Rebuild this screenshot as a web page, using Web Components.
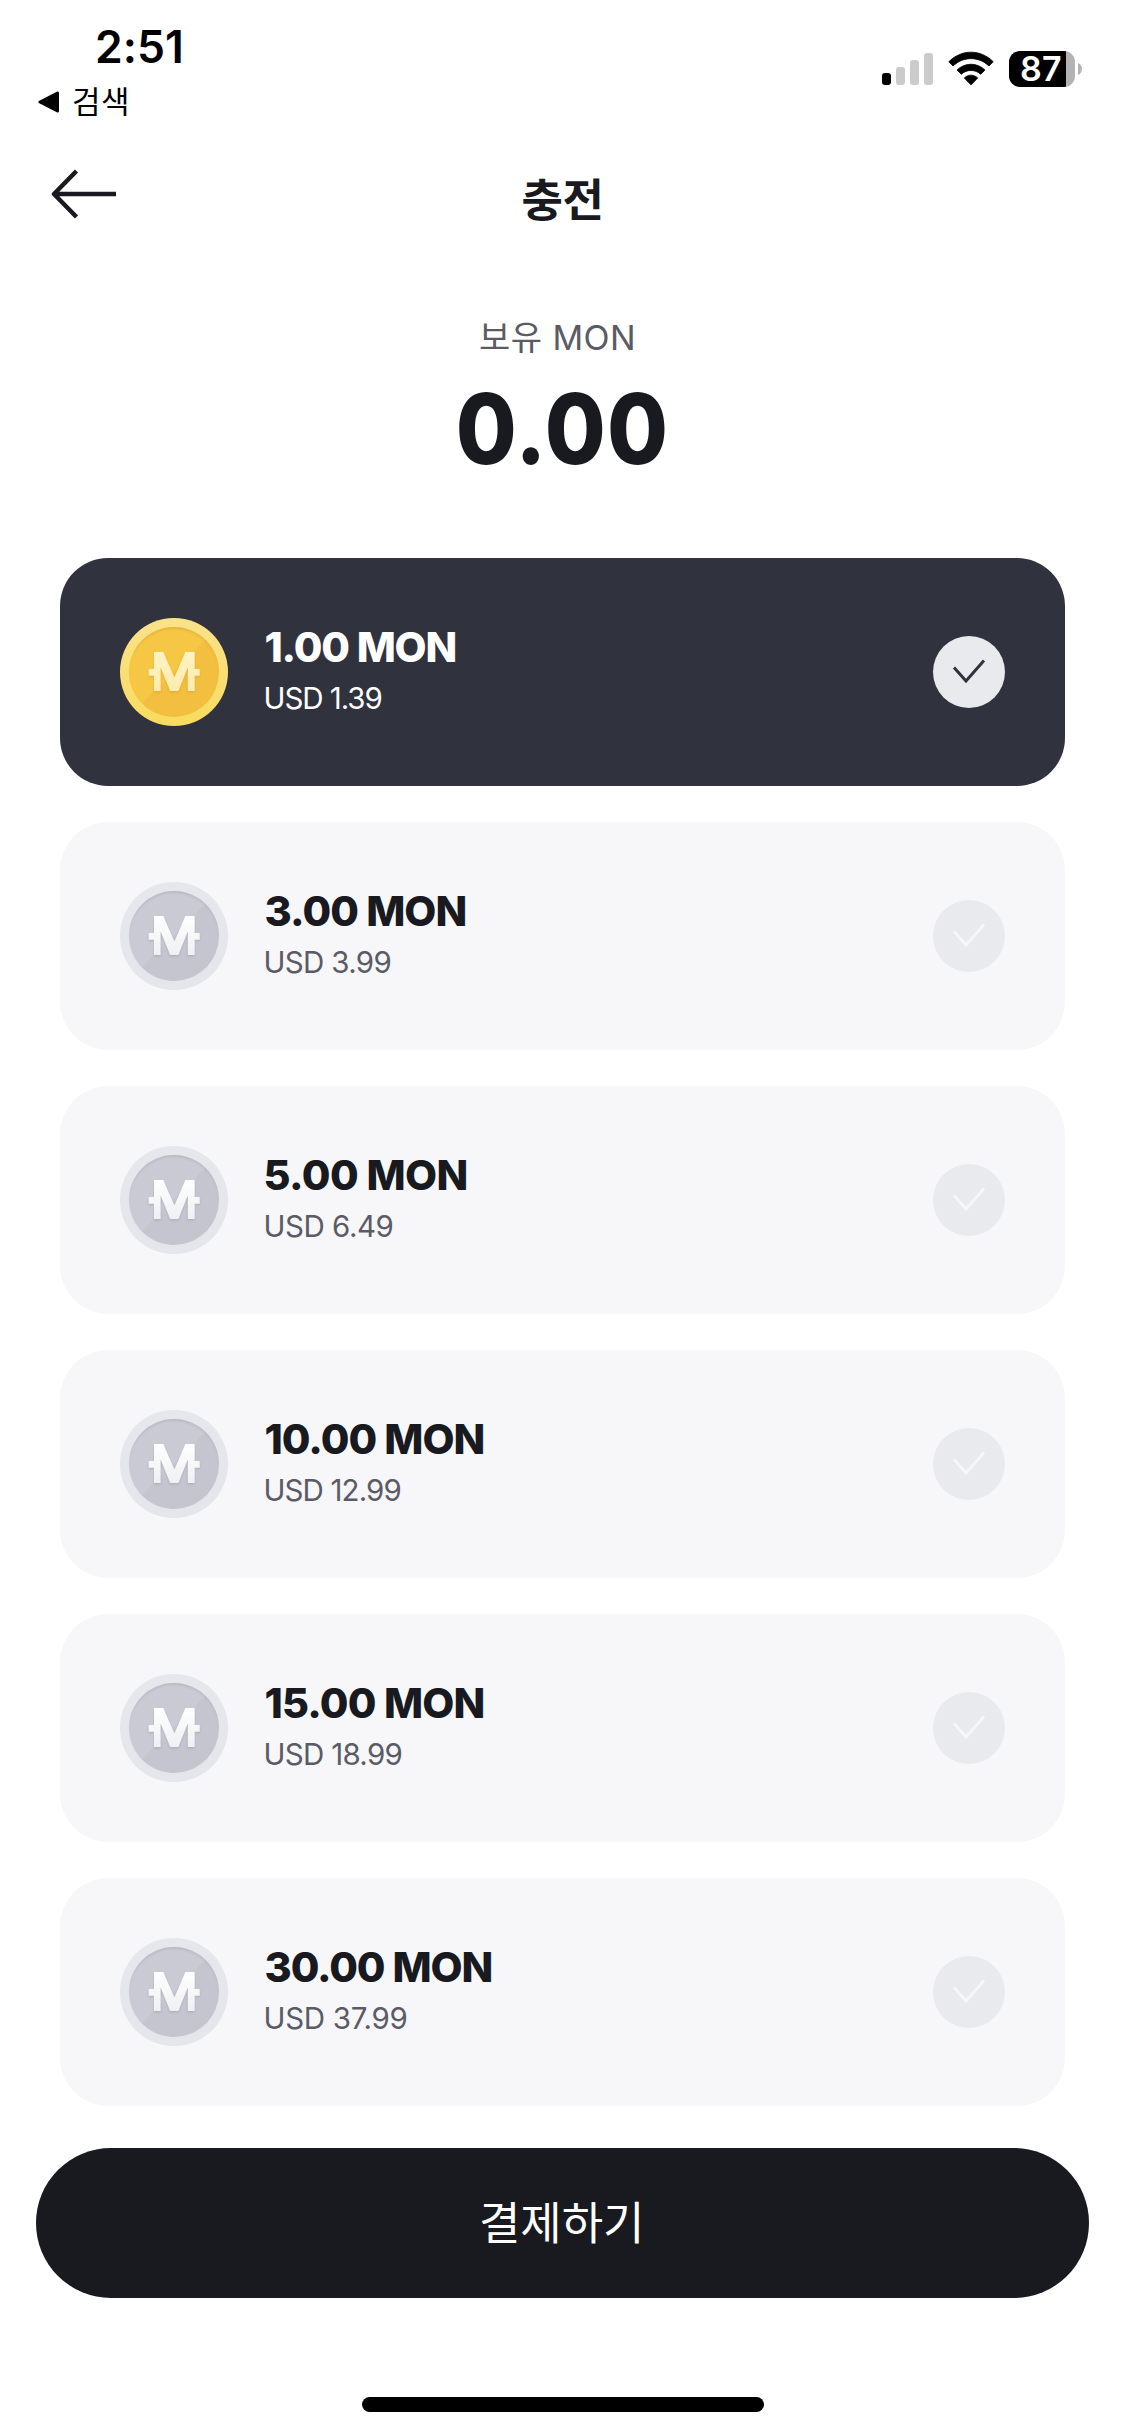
<!DOCTYPE html>
<html lang="ko">
<head>
<meta charset="utf-8">
<title>충전</title>
<style>
  html, body { margin: 0; background: #fff; }
  body { width: 1125px; height: 2436px; overflow: hidden; font-family: Inter, "Noto Sans CJK KR", sans-serif; color: #191920; }
</style>
</head>
<body>
<charge-screen></charge-screen>
<script>
const define = (name, html, setup) => customElements.define(name, class extends HTMLElement {
  connectedCallback() {
    if (this.shadowRoot) return;
    const t = document.createElement('template');
    t.innerHTML = html;
    this.attachShadow({ mode: 'open' }).appendChild(t.content.cloneNode(true));
    if (setup) setup(this, this.shadowRoot);
  }
});

/* One line of text whose tracking is set so that its ink spans "w" pixels. */
const pen = document.createElement('canvas').getContext('2d');
define('fit-text', `<style>
  :host { display: block; white-space: nowrap; width: var(--w); flex: none; }
</style><slot></slot>`, (el) => {
  const text = el.textContent, w = +el.getAttribute('w');
  const cs = getComputedStyle(el);
  pen.font = `${cs.fontWeight} ${cs.fontSize} ${cs.fontFamily}`;
  const m = pen.measureText(text);
  const ink = m.actualBoundingBoxLeft + m.actualBoundingBoxRight;
  el.style.setProperty('--w', w + 'px');
  el.style.letterSpacing = ((w - ink) / (text.length - 1)).toFixed(3) + 'px';
  el.style.textIndent = m.actualBoundingBoxLeft.toFixed(2) + 'px';
});

define('status-bar', `<style>
  :host { display: flex; justify-content: space-between; height: 132px; color: #000; }
  .left { padding: 23px 0 0 38px; }
  .time { font-size: 44.5px; font-weight: 600; line-height: 48px; padding-left: 59px; }
  .back { display: flex; align-items: center; gap: 14px; margin-top: 11px; font-size: 31px; line-height: 40px; font-weight: 400; }
  .right { display: flex; align-items: center; height: 36px; padding: 51px 43px 0 0; }
  .signal { margin-right: 15px; } .wifi { margin-right: 15px; }
  .battery { display: flex; align-items: center; justify-content: center; width: 66px; height: 36px; border-radius: 11px; background: linear-gradient(90deg, #000 57px, #b3b3b3 57px); color: #fff; font-size: 34px; line-height: 36px; font-weight: 600; }
  .battery fit-text { margin-right: 2px; }
  .nub { margin-left: 3px; }
  svg { display: block; flex: none; }
</style>
<div class="left">
  <div class="time"><fit-text w="84">2:51</fit-text></div>
  <div class="back">
    <svg width="21" height="22" viewBox="0 0 21 22"><path d="M2 11 L19.5 2 V20 Z" stroke="#000" stroke-width="3" stroke-linejoin="round"/></svg>
    <fit-text w="54">검색</fit-text>
  </div>
</div>
<div class="right">
  <svg class="signal" width="51" height="36" viewBox="0 0 51 36"><rect y="22" width="9" height="12" rx="3"/><g fill="#cbcbcb"><rect x="14" y="16" width="9" height="18" rx="3"/><rect x="28" y="9" width="9" height="25" rx="3"/><rect x="42" y="2" width="9" height="32" rx="3"/></g></svg>
  <svg class="wifi" width="46" height="36" viewBox="0 0 46 36"><path d="M0.8 10.7 C13.5 -2 32.5 -2 45.2 10.7 L41 15 C30.8 5.2 15.2 5.2 5 15 Z M9 19 C17 11.3 29 11.3 37 19 L32.7 23.3 C27.4 18.2 18.6 18.2 13.3 23.3 Z M16.3 27 C20 23.2 26 23.2 29.7 27 L23 33.9 Z" stroke="#000" stroke-width=".8" stroke-linejoin="round"/></svg>
  <div class="battery"><fit-text w="40">87</fit-text></div>
  <svg class="nub" width="4" height="12" viewBox="0 0 4 12"><path d="M0 0 C5.3 2 5.3 10 0 12 Z" fill="#b3b3b3"/></svg>
</div>`);

define('nav-bar', `<style>
  :host { display: grid; grid-template-columns: 1fr auto 1fr; height: 124px; padding: 0 53px 0 51px; box-sizing: border-box; }
  svg { display: block; margin-top: 36px; }
  .title { font-size: 45px; font-weight: 700; line-height: 50px; padding-top: 44px; }
</style>
<svg width="65" height="52" viewBox="0 0 65 52"><path d="M25.5 3 L3 26 L25.5 49 M3 26 H65" fill="none" stroke="#191920" stroke-width="4.5" stroke-linejoin="round"/></svg>
<div class="title"><fit-text w="78">충전</fit-text></div>`);

define('mon-balance', `<style>
  :host { display: flex; flex-direction: column; align-items: center; height: 302px; box-sizing: border-box; padding-top: 61px; }
  .label { font-size: 34px; line-height: 42px; color: #5b5b66; font-weight: 400; margin-right: 12px; }
  .amount { font-size: 98px; line-height: 110px; font-weight: 800; margin: 15px 3px 0 0; transform: scaleX(.9); }
</style>
<div class="label"><fit-text w="153">보유 MON</fit-text></div>
<div class="amount"><fit-text w="229">0.00</fit-text></div>`);

define('mon-coin', `<style>
  :host { display: block; width: 108px; height: 108px; flex: none; }
  svg { display: block; overflow: visible; }
  svg { --rimA: #e6e7ec; --rimB: #e5e6eb; --faceA: #c9cad3; --faceB: #c4c5ce; --edge: #aeb0ba; --markA: #fff; --markB: #f0f0f3; --shade: #9a9ca8; }
  :host([gold]) svg { --rimA: #fae28a; --rimB: #f8dc5e; --faceA: #f6c744; --faceB: #f3bf40; --edge: #dba638; --markA: #fff3c2; --markB: #fcecb0; --shade: #d59c28; }
</style>
<svg width="108" height="108" viewBox="0 0 108 108">
  <defs>
    <linearGradient id="rim" x2="0" y2="1"><stop style="stop-color:var(--rimA)"/><stop offset="1" style="stop-color:var(--rimB)"/></linearGradient>
    <linearGradient id="face" x2="1" y2="1"><stop offset=".49" style="stop-color:var(--faceA)"/><stop offset=".5" style="stop-color:var(--faceB)"/></linearGradient>
    <linearGradient id="mark" x2="0" y2="1"><stop style="stop-color:var(--markA)"/><stop offset="1" style="stop-color:var(--markB)"/></linearGradient>
    <clipPath id="disc"><circle cx="54" cy="54" r="45"/></clipPath>
    <filter id="soft" x="-20%" y="-20%" width="140%" height="140%"><feGaussianBlur stdDeviation="1.3"/></filter>
  </defs>
  <circle cx="54" cy="54" r="54" fill="url(#rim)"/>
  <circle cx="54" cy="54" r="45" fill="url(#face)"/>
  <g clip-path="url(#disc)"><circle cx="54" cy="56.5" r="47.5" fill="none" style="stroke:var(--edge)" stroke-width="3" filter="url(#soft)" opacity=".75"/></g>
  <path d="M34 34 H43.3 L54.4 59.5 L65.4 34 H74.7 V51 H79.7 V57.7 H74.7 V73 H67.3 V50 L58.4 73 H50.2 L40.9 50 V73 H34 V57.7 H28.7 V51 H34 Z" transform="translate(0 1.5)" style="fill:var(--shade)" opacity=".5" filter="url(#soft)"/>
  <path d="M34 34 H43.3 L54.4 59.5 L65.4 34 H74.7 V51 H79.7 V57.7 H74.7 V73 H67.8 V49.5 L58.4 73 H50.2 L40.6 49.5 V73 H34 V57.7 H28.7 V51 H34 Z" fill="url(#mark)"/>
</svg>`);

define('check-mark', `<style>
  :host { display: block; width: 72px; height: 72px; border-radius: 50%; background: #e9eaee; color: #f7f7fa; flex: none; }
  :host([on]) { color: #30323d; }
  svg { display: block; }
</style>
<svg width="72" height="72" viewBox="0 0 72 72"><path d="M21 31.5 L33 45 L51 24.5" fill="none" stroke="currentColor" stroke-width="3"/></svg>`);

define('mon-option', `<style>
  :host { display: flex; align-items: center; height: 228px; box-sizing: border-box; padding: 0 60px; border-radius: 48px; background: #f7f7fa; color: #191920; --sub: #5b5b66; }
  :host([selected]) { background: #30323d; color: #fff; --sub: #fff; }
  .text { flex: 1; padding: 0 0 8px 37.5px; }
  .mon { font-size: 41.5px; line-height: 60px; font-weight: 770; }
  .usd { font-size: 29.5px; line-height: 42px; font-weight: 380; color: var(--sub); }
</style>
<mon-coin></mon-coin>
<div class="text"><div class="mon"></div><div class="usd"></div></div>
<check-mark></check-mark>`, (el, root) => {
  if (el.hasAttribute('selected')) {
    root.querySelector('mon-coin').setAttribute('gold', '');
    root.querySelector('check-mark').setAttribute('on', '');
  }
  const put = (cls, text, w) => root.querySelector(cls).innerHTML = `<fit-text w="${w}">${text}</fit-text>`;
  put('.mon', el.getAttribute('mon') + ' MON', el.getAttribute('mw'));
  put('.usd', 'USD ' + el.getAttribute('usd'), el.getAttribute('uw'));
});

define('pay-button', `<style>
  :host { display: block; margin: 42px 36px 0; }
  button { display: flex; align-items: center; justify-content: center; width: 100%; height: 150px; border: 0; padding: 0 5px 6px 0; border-radius: 75px; background: #191920; color: #fff; font: inherit; font-size: 45px; font-weight: 400; }
</style>
<button><fit-text w="158">결제하기</fit-text></button>`);

define('charge-screen', `<style>
  :host { display: flex; flex-direction: column; width: 1125px; height: 2436px; }
  .list { display: flex; flex-direction: column; gap: 36px; padding: 0 60px; }
  .home { width: 402px; height: 15px; border-radius: 8px; background: #000; margin: 99px auto 0; }
</style>
<status-bar></status-bar>
<nav-bar></nav-bar>
<mon-balance></mon-balance>
<div class="list">
  <mon-option selected mon="1.00" mw="190" usd="1.39" uw="116"></mon-option>
  <mon-option mon="3.00" mw="200" usd="3.99" uw="125"></mon-option>
  <mon-option mon="5.00" mw="201" usd="6.49" uw="127"></mon-option>
  <mon-option mon="10.00" mw="218" usd="12.99" uw="135"></mon-option>
  <mon-option mon="15.00" mw="218" usd="18.99" uw="136"></mon-option>
  <mon-option mon="30.00" mw="226" usd="37.99" uw="141"></mon-option>
</div>
<pay-button></pay-button>
<div class="home"></div>`);
</script>
</body>
</html>
